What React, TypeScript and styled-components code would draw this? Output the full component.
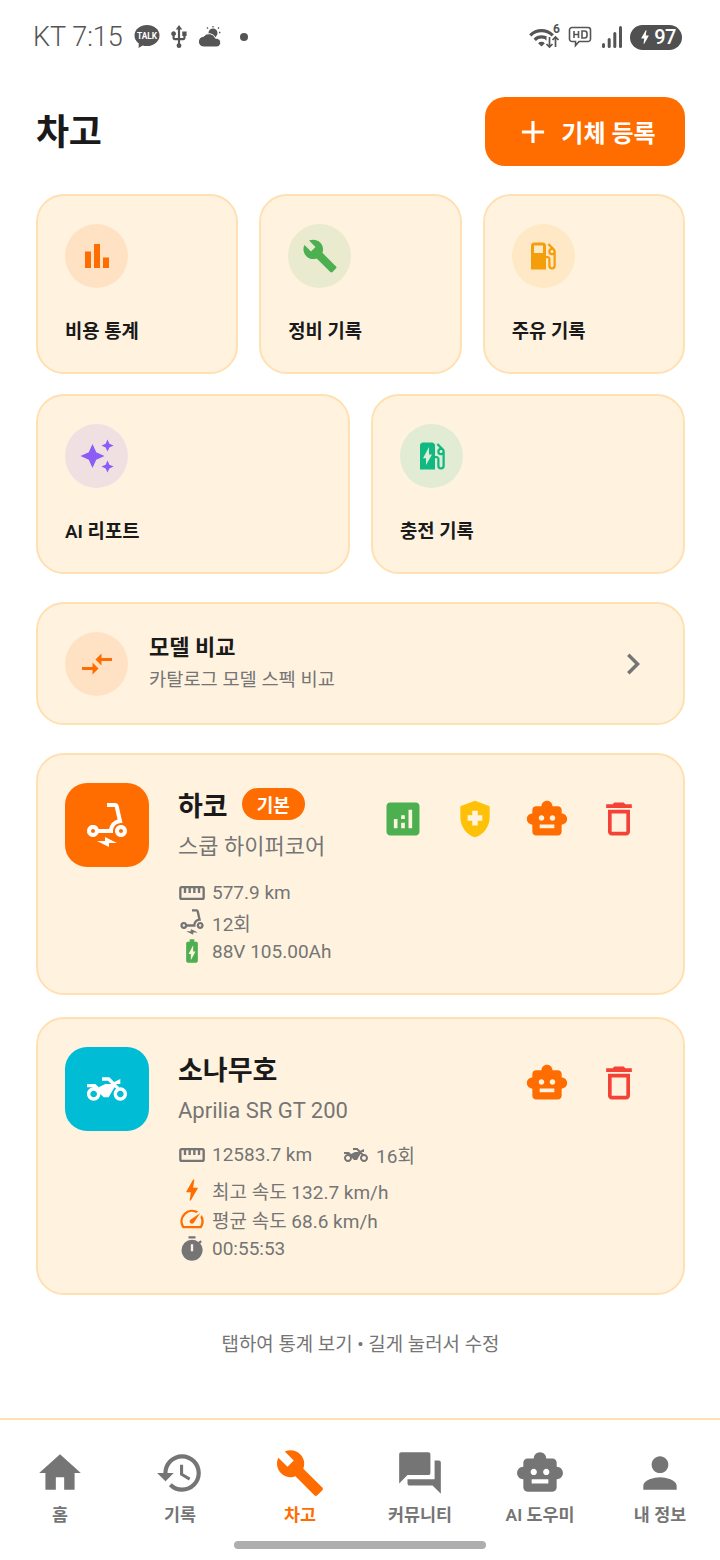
import styled, { createGlobalStyle } from 'styled-components';
import {
  MdAdd, MdAnalytics, MdAutoAwesome, MdBarChart, MdBatteryChargingFull, MdBolt, MdBuild, MdChevronRight,
  MdCompareArrows, MdDeleteOutline, MdElectricScooter, MdEvStation, MdForum,
  MdHealthAndSafety, MdHistory, MdHome, MdLocalGasStation, MdPerson, MdSmartToy, MdSpeed,
  MdStraighten, MdTimer, MdTwoWheeler, MdUsb, MdWifi,
} from 'react-icons/md';
import type { IconType } from 'react-icons';

const ORANGE = '#FF6D00';
const GRAY = '#757575';

const GlobalStyle = createGlobalStyle`
  body {
    margin: 0;
    background: #fff;
    font-family: Roboto, "Noto Sans CJK KR", sans-serif;
    color: #1a1a1a;
  }
`;

const Page = styled.div`
  width: 720px;
  height: 1560px;
  display: flex;
  flex-direction: column;
  overflow: hidden;
`;

const StatusBar = styled.div`
  height: 72px;
  padding: 2px 38px 0 33px;
  box-sizing: border-box;
  display: flex;
  align-items: center;
  color: #555;
`;

const StatusTime = styled.span`
  font-size: 27px;
  font-weight: 300;
  margin-right: 11px;
`;

const StatusGroup = styled.div<{ $gap: number }>`
  display: flex;
  align-items: center;
  gap: ${p => p.$gap}px;
`;

const StatusRight = styled(StatusGroup)`
  margin-left: auto;
`;

const Dot = styled.span`
  width: 8px;
  height: 8px;
  border-radius: 50%;
  background: #555;
  margin-left: 12px;
`;

const WifiWrap = styled.div`
  position: relative;
  width: 32px;
  height: 26px;
`;

const WifiSix = styled.span`
  position: absolute;
  right: 0;
  top: -2px;
  font-size: 12px;
  font-weight: 700;
`;

const WifiArrowsSvg = styled.svg`
  position: absolute;
  left: 0;
  top: 0;
`;

const SignalSvg = styled.svg`
  margin-left: 2px;
`;

const Battery = styled.div`
  width: 52px;
  height: 25px;
  border-radius: 13px;
  background: #505050;
  color: #fff;
  display: flex;
  align-items: center;
  justify-content: center;
  font-size: 20px;
  font-weight: 500;
  letter-spacing: -0.5px;
`;

const Content = styled.main`
  padding: 0 35px 0 36px;
  display: flex;
  flex-direction: column;
`;

const Header = styled.header`
  display: flex;
  justify-content: space-between;
  align-items: center;
  margin: 25px 0 28px;
`;

const Title = styled.h1`
  margin: 0 0 6px;
  font-size: 36px;
  font-weight: 700;
  letter-spacing: -0.4px;
`;

const AddButton = styled.button`
  width: 200px;
  height: 69px;
  border: 0;
  border-radius: 20px;
  background: ${ORANGE};
  color: #fff;
  font: 600 24px Roboto, "Noto Sans CJK KR", sans-serif;
  display: flex;
  align-items: center;
  justify-content: center;
  gap: 9px;
`;

const Grid = styled.div<{ $cols: number }>`
  display: grid;
  grid-template-columns: repeat(${p => p.$cols}, 1fr);
  column-gap: 21px;
  margin-bottom: 20px;
`;

const Panel = styled.div`
  box-sizing: border-box;
  background: #FFF3E0;
  border: 2px solid #FFE0B2;
  border-radius: 28px;
`;

const ShortcutCard = styled(Panel)`
  height: 180px;
  padding: 28px 27px;
`;

const Circle = styled.div<{ $color: string }>`
  width: 63px;
  height: 64px;
  border-radius: 50%;
  background: ${p => p.$color}1F;
  color: ${p => p.$color};
  display: flex;
  align-items: center;
  justify-content: center;
  flex-shrink: 0;
`;

const ShortcutLabel = styled.div`
  margin-top: 29px;
  font-size: 18.800px;
  font-weight: 600;
  line-height: 30px;
`;

const CompareCard = styled(Panel)`
  height: 123px;
  margin-top: 8px;
  padding: 0 27px;
  display: flex;
  align-items: center;
  gap: 21px;
`;

const CompareText = styled.div`
  flex: 1;
`;

const CompareTitle = styled.div`
  font-size: 22px;
  font-weight: 700;
  line-height: 30px;
`;

const CompareSub = styled.div`
  font-size: 18.700px;
  color: ${GRAY};
  line-height: 30px;
  margin-top: 2px;
`;

const Chevron = styled(MdChevronRight)`
  margin-right: 2px;
`;

const VehicleCard = styled(Panel)<{ $height: number }>`
  height: ${p => p.$height}px;
  padding: 28px 27px;
  display: flex;
  margin-bottom: 22px;
`;

const VehicleIcon = styled.div<{ $color: string }>`
  width: 84px;
  height: 84px;
  border-radius: 22px;
  background: ${p => p.$color};
  color: #fff;
  display: flex;
  align-items: center;
  justify-content: center;
  flex-shrink: 0;
`;

const VehicleBody = styled.div`
  margin-left: 29px;
  flex: 1;
`;

const NameRow = styled.div`
  display: flex;
  align-items: center;
  gap: 14px;
  height: 42px;
`;

const VehicleName = styled.div`
  font-size: 27px;
  font-weight: 700;
`;

const Badge = styled.span`
  width: 63px;
  height: 32px;
  border-radius: 16px;
  background: ${ORANGE};
  color: #fff;
  font-size: 18px;
  font-weight: 600;
  display: flex;
  align-items: center;
  justify-content: center;
`;

const VehicleSub = styled.div`
  font-size: 22px;
  color: ${GRAY};
  line-height: 34px;
  margin: 5px 0 14px;
`;

const StatGroup = styled.div<{ $mt?: number; $mb?: number }>`
  margin-top: ${p => p.$mt ?? 0}px;
  margin-bottom: ${p => p.$mb ?? 0}px;
`;

const StatLine = styled.div`
  display: flex;
  gap: 30px;
`;

const Stat = styled.div`
  display: flex;
  align-items: center;
  gap: 6px;
  height: 29.400px;
  font-size: 19px;
  color: ${GRAY};
`;

const SmallBike = styled.span`
  width: 28px;
  display: flex;
  justify-content: center;
`;

const Actions = styled.div`
  display: flex;
  align-self: flex-start;
  margin-top: 14px;
  margin-right: 15px;
  gap: 28px;
`;

const Hint = styled.div`
  text-align: center;
  color: ${GRAY};
  font-size: 18.900px;
  margin-top: 12px;
`;

const BottomNav = styled.nav`
  margin-top: auto;
  height: 142px;
  box-sizing: border-box;
  border-top: 2px solid #FFE0B2;
  position: relative;
  display: grid;
  grid-template-columns: repeat(6, 1fr);
  padding-top: 26px;
`;

const NavItem = styled.div<{ $active?: boolean }>`
  display: flex;
  flex-direction: column;
  align-items: center;
  color: ${p => (p.$active ? ORANGE : GRAY)};
  font-size: 17.400px;
  font-weight: 600;
  line-height: 24px;
`;

const NavIcon = styled.div`
  height: 54px;
  display: flex;
  align-items: center;
  margin-bottom: 3px;
`;

const HomeBar = styled.div`
  position: absolute;
  left: 234px;
  bottom: 11px;
  width: 252px;
  height: 8px;
  border-radius: 4px;
  background: #aeaeae;
`;

const TalkIcon = () => (
  <svg width="26" height="24" viewBox="0 0 26 24">
    <ellipse cx="13" cy="10.500" rx="12.500" ry="10.500" fill="#555" />
    <path d="M5 17l-.5 6L11 19z" fill="#555" />
    <text x="13" y="13.600" fontSize="8.400" fontWeight="700" fill="#fff" textAnchor="middle" fontFamily="Roboto">TALK</text>
  </svg>
);

const WeatherIcon = () => (
  <svg width="24" height="22" viewBox="0 0 24 22" fill="#555">
    <circle cx="15" cy="7" r="4.500" />
    <path d="M15 0v1.400M9 1.400l1 1.200M21 1.400l-1 1.200M22.400 6.500h-1.400" stroke="#555" strokeWidth="1.300" />
    <path d="M6 21a5.300 5.300 0 0 1-.6-10.600A7 7 0 0 1 17.600 12.300 4.400 4.400 0 0 1 19 21z" stroke="#fff" strokeWidth="1" />
  </svg>
);

const HdIcon = () => (
  <svg width="24" height="22" viewBox="0 0 24 22" fill="none" stroke="#555" strokeWidth="1.600">
    <path d="M4 1.500h16a2.500 2.500 0 0 1 2.500 2.500v9a2.500 2.500 0 0 1-2.500 2.500H11L7.500 19.500v-4H4A2.500 2.500 0 0 1 1.500 13V4A2.500 2.500 0 0 1 4 1.500z" />
    <path d="M6 5v7M6 8.500h4.500M10.500 5v7M14 5v7h2.500a2.500 2.500 0 0 0 2.500-2.500v-2A2.500 2.500 0 0 0 16.500 5z" />
  </svg>
);

const SignalIcon = () => (
  <SignalSvg width="20" height="24" viewBox="0 0 20 24" fill="#555">
    <rect x="0" y="18" width="3" height="5" rx="1.500" />
    <rect x="5.700" y="13" width="3" height="10" rx="1.500" />
    <rect x="11.300" y="7" width="3" height="16" rx="1.500" />
    <rect x="17" y="1" width="3" height="22" rx="1.500" />
  </SignalSvg>
);

const WifiArrows = () => (
  <WifiArrowsSvg width="32" height="26" viewBox="0 0 32 26" fill="none">
    <path d="M21.500 13v10M27.500 13v10" stroke="#fff" strokeWidth="6" />
    <path d="M21.500 13v10M18.500 20l3 3 3-3M27.500 23V13M24.500 16l3-3 3 3" stroke="#555" strokeWidth="1.700" />
  </WifiArrowsSvg>
);

const shortcutsTop: { icon: IconType; color: string; label: string }[] = [
  { icon: MdBarChart, color: '#FF6D00', label: '비용 통계' },
  { icon: MdBuild, color: '#4CAF50', label: '정비 기록' },
  { icon: MdLocalGasStation, color: '#F59E0B', label: '주유 기록' },
];

const shortcutsBottom: { icon: IconType; color: string; label: string }[] = [
  { icon: MdAutoAwesome, color: '#8B5CF6', label: 'AI 리포트' },
  { icon: MdEvStation, color: '#10B981', label: '충전 기록' },
];

const navItems: { icon: IconType; label: string; active?: boolean }[] = [
  { icon: MdHome, label: '홈' },
  { icon: MdHistory, label: '기록' },
  { icon: MdBuild, label: '차고', active: true },
  { icon: MdForum, label: '커뮤니티' },
  { icon: MdSmartToy, label: 'AI 도우미' },
  { icon: MdPerson, label: '내 정보' },
];

function Shortcut({ icon: Icon, color, label }: { icon: IconType; color: string; label: string }) {
  return (
    <ShortcutCard>
      <Circle $color={color}><Icon size={36} /></Circle>
      <ShortcutLabel>{label}</ShortcutLabel>
    </ShortcutCard>
  );
}

export default function App() {
  return (
    <Page>
      <GlobalStyle />
      <StatusBar>
        <StatusTime>KT 7:15</StatusTime>
        <StatusGroup $gap={6}>
          <TalkIcon />
          <MdUsb size={26} />
          <WeatherIcon />
          <Dot />
        </StatusGroup>
        <StatusRight $gap={8}>
          <WifiWrap>
            <MdWifi size={27} />
            <WifiSix>6</WifiSix>
            <WifiArrows />
          </WifiWrap>
          <HdIcon />
          <SignalIcon />
          <Battery><MdBolt size={18} />97</Battery>
        </StatusRight>
      </StatusBar>

      <Content>
        <Header>
          <Title>차고</Title>
          <AddButton><MdAdd size={38} />기체 등록</AddButton>
        </Header>

        <Grid $cols={3}>
          {shortcutsTop.map(s => <Shortcut key={s.label} {...s} />)}
        </Grid>
        <Grid $cols={2}>
          {shortcutsBottom.map(s => <Shortcut key={s.label} {...s} />)}
        </Grid>

        <CompareCard>
          <Circle $color="#FF6D00"><MdCompareArrows size={36} /></Circle>
          <CompareText>
            <CompareTitle>모델 비교</CompareTitle>
            <CompareSub>카탈로그 모델 스펙 비교</CompareSub>
          </CompareText>
          <Chevron size={42} color={GRAY} />
        </CompareCard>

        <VehicleCard $height={242} style={{ marginTop: 28 }}>
          <VehicleIcon $color={ORANGE}><MdElectricScooter size={48} /></VehicleIcon>
          <VehicleBody>
            <NameRow>
              <VehicleName>하코</VehicleName>
              <Badge>기본</Badge>
            </NameRow>
            <VehicleSub>스쿱 하이퍼코어</VehicleSub>
            <StatGroup>
              <Stat><MdStraighten size={28} />577.9 km</Stat>
              <Stat><MdElectricScooter size={28} />12회</Stat>
              <Stat><MdBatteryChargingFull size={28} color="#4CAF50" />88V 105.00Ah</Stat>
            </StatGroup>
          </VehicleBody>
          <Actions>
            <MdAnalytics size={44} color="#4CAF50" />
            <MdHealthAndSafety size={44} color="#FFC107" />
            <MdSmartToy size={44} color={ORANGE} />
            <MdDeleteOutline size={44} color="#F44336" />
          </Actions>
        </VehicleCard>

        <VehicleCard $height={278}>
          <VehicleIcon $color="#00BCD4"><MdTwoWheeler size={40} /></VehicleIcon>
          <VehicleBody>
            <NameRow>
              <VehicleName>소나무호</VehicleName>
            </NameRow>
            <VehicleSub>Aprilia SR GT 200</VehicleSub>
            <StatGroup $mt={-2} $mb={6}>
              <StatLine>
                <Stat><MdStraighten size={28} />12583.7 km</Stat>
                <Stat><SmallBike><MdTwoWheeler size={24} /></SmallBike>16회</Stat>
              </StatLine>
            </StatGroup>
            <StatGroup>
              <Stat><MdBolt size={28} color={ORANGE} />최고 속도 132.7 km/h</Stat>
              <Stat><MdSpeed size={28} color={ORANGE} />평균 속도 68.6 km/h</Stat>
              <Stat><MdTimer size={28} />00:55:53</Stat>
            </StatGroup>
          </VehicleBody>
          <Actions>
            <MdSmartToy size={44} color={ORANGE} />
            <MdDeleteOutline size={44} color="#F44336" />
          </Actions>
        </VehicleCard>

        <Hint>탭하여 통계 보기 • 길게 눌러서 수정</Hint>
      </Content>

      <BottomNav>
        {navItems.map(({ icon: Icon, label, active }) => (
          <NavItem key={label} $active={active}>
            <NavIcon><Icon size={50} /></NavIcon>
            {label}
          </NavItem>
        ))}
        <HomeBar />
      </BottomNav>
    </Page>
  );
}
